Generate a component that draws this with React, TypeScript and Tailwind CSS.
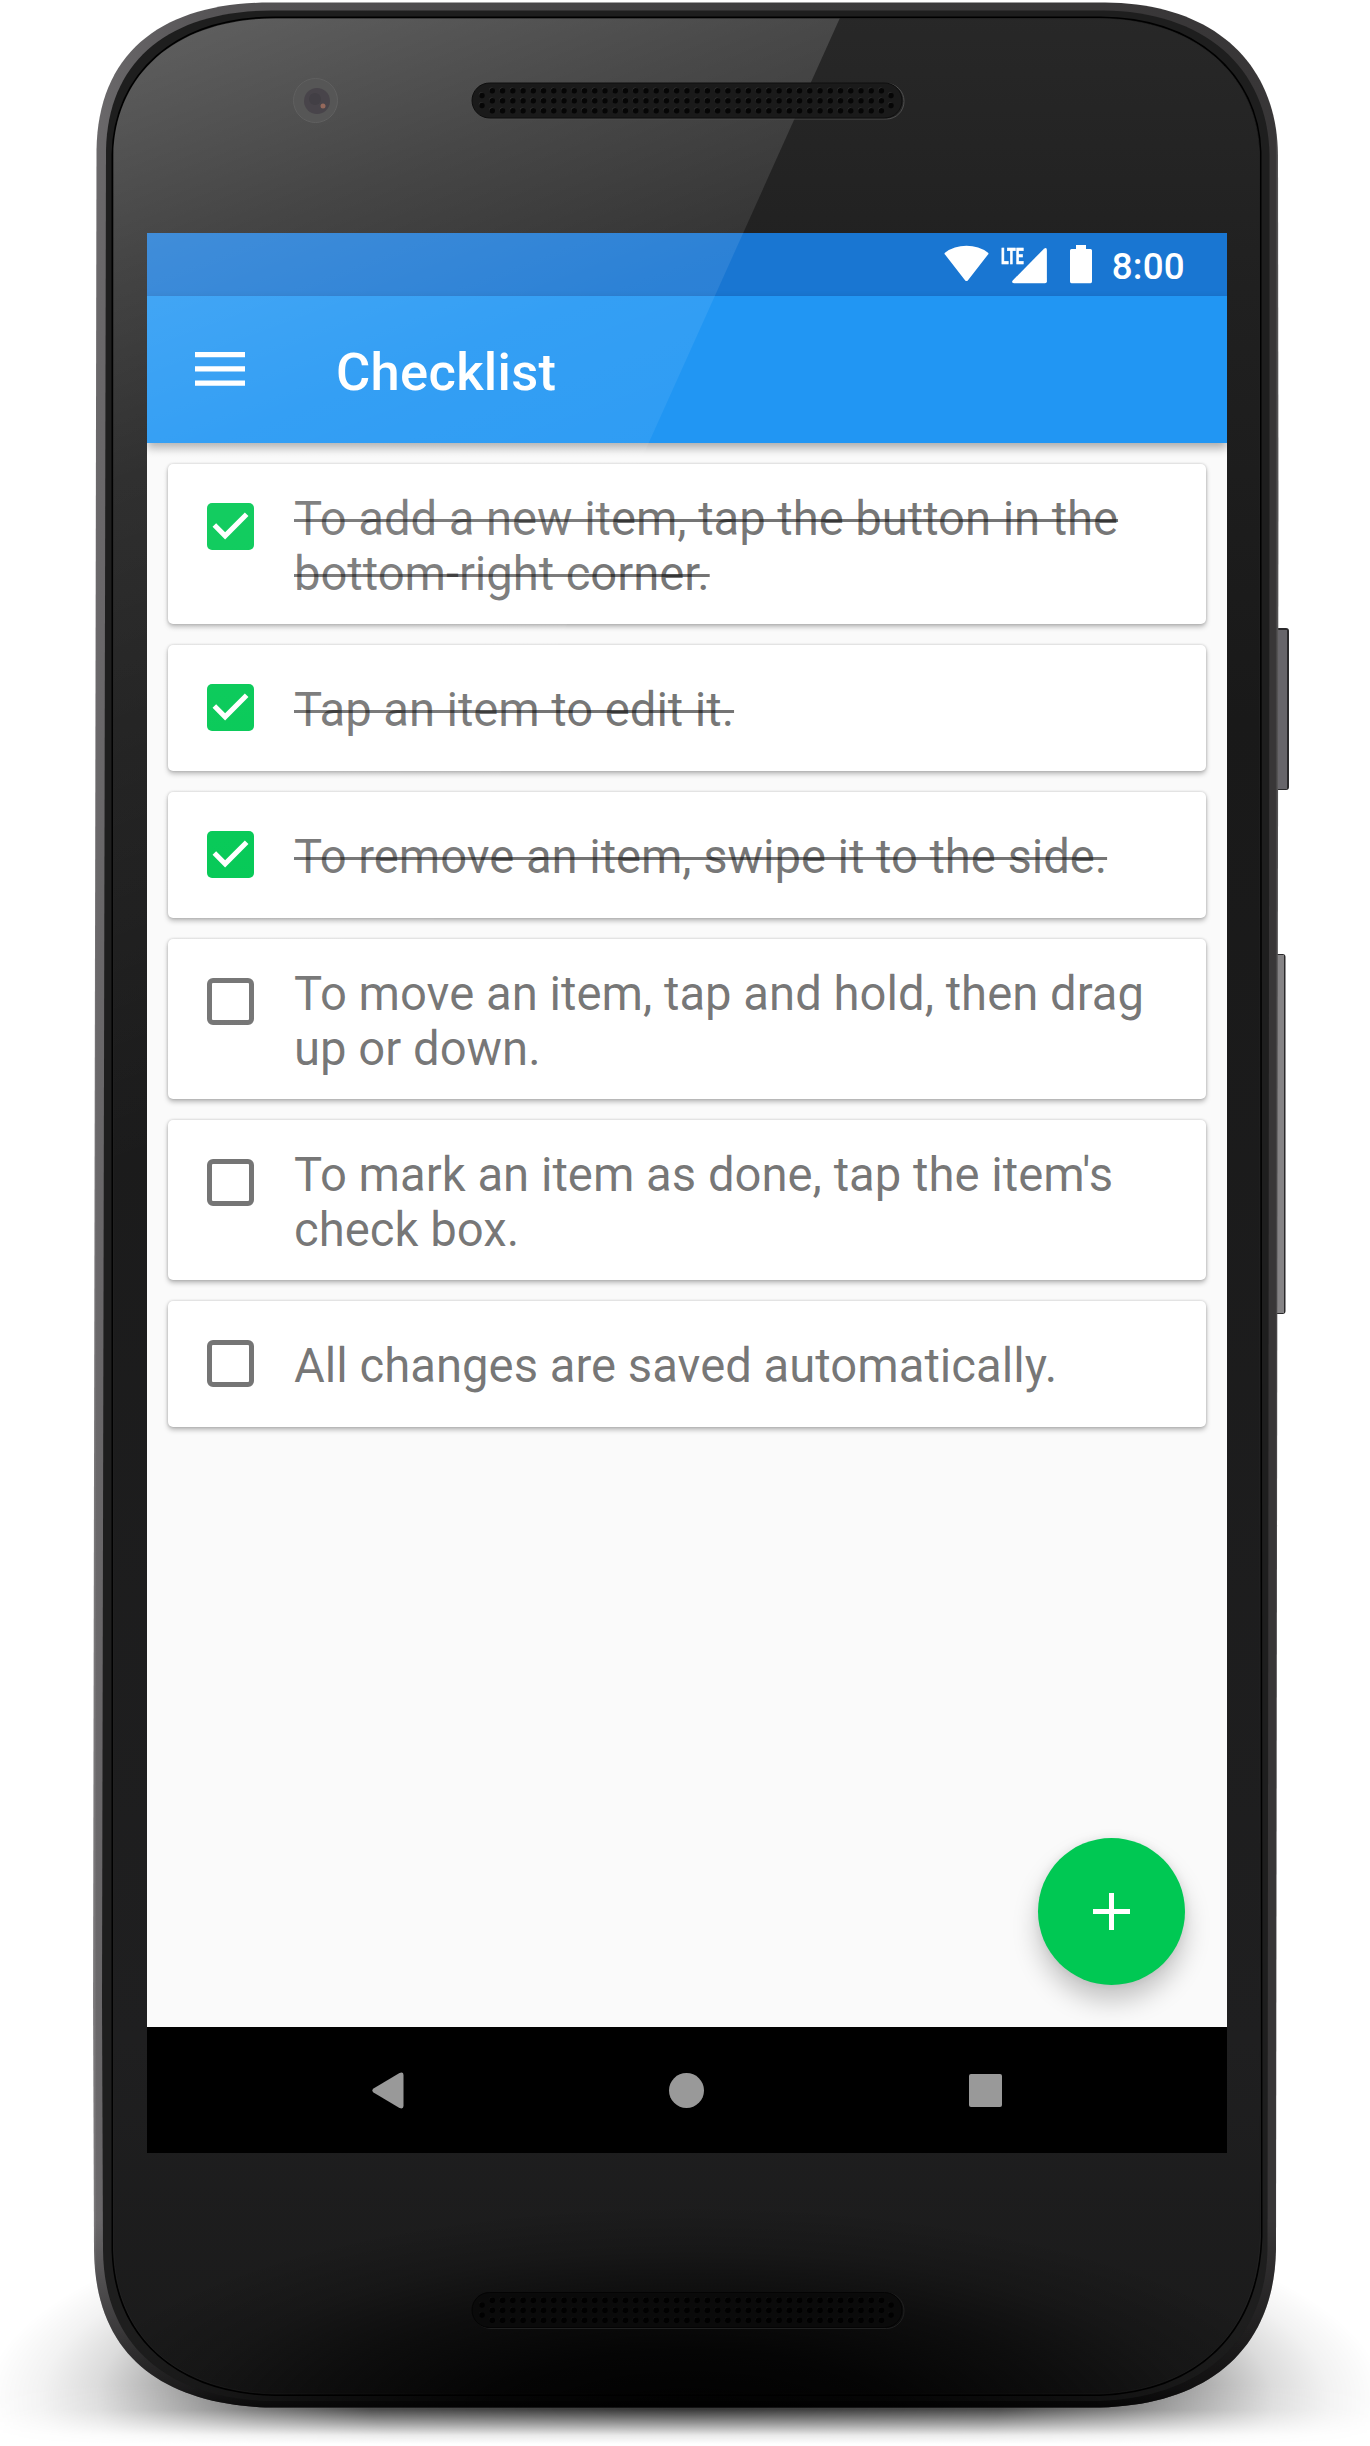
type Item = { lines: string[]; done: boolean };

const items: Item[] = [
  { lines: ["To add a new item, tap the button in the", "bottom-right corner."], done: true },
  { lines: ["Tap an item to edit it."], done: true },
  { lines: ["To remove an item, swipe it to the side."], done: true },
  { lines: ["To move an item, tap and hold, then drag", "up or down."], done: false },
  { lines: ["To mark an item as done, tap the item's", "check box."], done: false },
  { lines: ["All changes are saved automatically."], done: false },
];

const BODY =
  "M96.5 150C98 50 165 2.5 270 2.5H1105C1210 3 1277 60 1278 155L1278.5 500L1276 2250C1274 2352 1205 2405 1100 2407.5H265C165 2403 95 2358 94 2250L93 2000Z";
const BAND =
  "M106 150C108 58 172 10.5 272 10.5H1103C1202 11 1268 66 1269.5 155V500L1267.5 2250C1265 2343 1200 2397 1100 2401H265C172 2397 104 2350 103 2250L102 2000Z";
const GLASS =
  "M113.5 155C115 75 175 18.5 275 18.5H1100C1195 19 1257 75 1259.5 152V500L1260.5 2237C1257 2335 1195 2390 1100 2394H275C180 2392 116 2340 113.5 2250Z";

/** Perforated speaker slot, 431 x 35 */
function Speaker({ x, y, dim }: { x: number; y: number; dim?: boolean }) {
  const holes: [number, number][] = [
    [10, 12.5],
    [10, 22.5],
    [419, 12.5],
    [419, 22.5],
  ];
  for (let c = 0; c < 39; c++) for (let r = 0; r < 3; r++) holes.push([20.3 + c * 10.24, 7.8 + r * 10]);
  return (
    <g transform={`translate(${x} ${y})`}>
      <rect x="1.5" y="0.5" width="430.5" height="35.5" rx="17.5" fill="none" stroke={dim ? "#202020" : "#4e4e4e"} strokeWidth="1" />
      <rect width="430" height="35" rx="17.5" fill={dim ? "#0a0a0a" : "#1a1a1a"} stroke={dim ? "#040404" : "#0e0e0e"} />
      {holes.map(([cx, cy], i) => (
        <g key={i}>
          <circle cx={cx - 0.7} cy={cy - 0.9} r="2.4" fill={dim ? "#141414" : "#343434"} />
          <circle cx={cx} cy={cy} r="2.7" fill={dim ? "#010101" : "#060606"} />
        </g>
      ))}
    </g>
  );
}

function PhoneBody() {
  return (
    <svg className="absolute inset-0" width="1370" height="2446" viewBox="0 0 1370 2446" aria-hidden="true">
      <defs>
        <linearGradient id="rim" x1="93" x2="1279" y1="0" y2="0" gradientUnits="userSpaceOnUse">
          <stop offset="0" stopColor="#858385" />
          <stop offset="0.003" stopColor="#6a686a" />
          <stop offset="0.1" stopColor="#565456" />
          <stop offset="0.6" stopColor="#3c3b3c" />
          <stop offset="0.997" stopColor="#383637" />
          <stop offset="1" stopColor="#6b6a6b" />
        </linearGradient>
        <linearGradient id="rimDark" x1="0" x2="0" y1="2220" y2="2407" gradientUnits="userSpaceOnUse">
          <stop offset="0" stopColor="#000" stopOpacity="0" />
          <stop offset="0.9" stopColor="#000" stopOpacity="0.65" />
          <stop offset="1" stopColor="#000" stopOpacity="0.8" />
        </linearGradient>
        <linearGradient id="glass" x1="0" x2="0" y1="0" y2="2400" gradientUnits="userSpaceOnUse">
          <stop offset="0" stopColor="#282828" />
          <stop offset="0.12" stopColor="#202020" />
          <stop offset="0.3" stopColor="#191919" />
          <stop offset="0.85" stopColor="#1f1f20" />
          <stop offset="1" stopColor="#1a1a1a" />
        </linearGradient>
        <radialGradient id="pool" cx="0" cy="0" r="1" gradientTransform="translate(690 2430) scale(640 225)" gradientUnits="userSpaceOnUse">
          <stop offset="0" stopColor="#000" />
          <stop offset="0.35" stopColor="#000" stopOpacity="0.82" />
          <stop offset="0.6" stopColor="#000" stopOpacity="0.5" />
          <stop offset="0.8" stopColor="#000" stopOpacity="0.18" />
          <stop offset="1" stopColor="#000" stopOpacity="0" />
        </radialGradient>
        <radialGradient id="shadow" cx="0" cy="0" r="1" gradientTransform="translate(685 2400) scale(700 225)" gradientUnits="userSpaceOnUse">
          <stop offset="0" stopColor="#000" stopOpacity="0.9" />
          <stop offset="0.45" stopColor="#000" stopOpacity="0.8" />
          <stop offset="0.62" stopColor="#000" stopOpacity="0.56" />
          <stop offset="0.74" stopColor="#000" stopOpacity="0.33" />
          <stop offset="0.84" stopColor="#000" stopOpacity="0.14" />
          <stop offset="0.92" stopColor="#000" stopOpacity="0.05" />
          <stop offset="1" stopColor="#000" stopOpacity="0" />
        </radialGradient>
        <linearGradient id="fade" x1="0" x2="0" y1="2385" y2="2444" gradientUnits="userSpaceOnUse">
          <stop offset="0" stopColor="#fff" />
          <stop offset="0.42" stopColor="#ddd" />
          <stop offset="0.65" stopColor="#777" />
          <stop offset="0.85" stopColor="#1a1a1a" />
          <stop offset="1" stopColor="#000" />
        </linearGradient>
        <mask id="floor" maskUnits="userSpaceOnUse" x="0" y="2100" width="1370" height="346">
          <rect y="2100" width="1370" height="346" fill="url(#fade)" />
        </mask>
      </defs>
      <rect y="2100" width="1370" height="346" fill="url(#shadow)" mask="url(#floor)" />
      <rect x="1272" y="628" width="17" height="162" rx="3" fill="#2a292b" />
      <rect x="1276" y="630" width="11" height="159" fill="#67656a" />
      <rect x="1272" y="954" width="13.5" height="360" rx="3" fill="#2a292b" />
      <rect x="1276" y="955" width="8" height="358" fill="#858385" />
      <path d={BODY} fill="url(#rim)" />
      <path d={BODY} fill="url(#rimDark)" />
      <path d={BAND} fill="#1e1e1e" />
      <path d={GLASS} fill="url(#glass)" stroke="#000" strokeWidth="4" />
      <path d={GLASS} fill="url(#glass)" stroke="#2c2c2c" strokeWidth="0.6" />
      <path d={BODY} fill="url(#pool)" />
      <Speaker x={472} y={2292.5} dim />
    </svg>
  );
}

/** Light reflection and the parts of the front glass that sit above it */
function Glare() {
  return (
    <svg className="pointer-events-none absolute inset-0 z-20" width="1370" height="2446" viewBox="0 0 1370 2446" aria-hidden="true">
      <defs>
        <linearGradient id="glare" x1="114" y1="19" x2="492" y2="1034" gradientUnits="userSpaceOnUse">
          <stop offset="0" stopColor="#fff" stopOpacity="0.27" />
          <stop offset="0.22" stopColor="#fff" stopOpacity="0.16" />
          <stop offset="0.4" stopColor="#fff" stopOpacity="0.085" />
          <stop offset="0.6" stopColor="#fff" stopOpacity="0.055" />
          <stop offset="1" stopColor="#fff" stopOpacity="0" />
        </linearGradient>
        <clipPath id="glassClip">
          <path d={GLASS} />
        </clipPath>
      </defs>
      <polygon points="100,0 848,0 200,1440 100,1440" fill="url(#glare)" clipPath="url(#glassClip)" />
      <circle cx="315.5" cy="100.5" r="22" fill="#565656" stroke="#606060" />
      <circle cx="317" cy="101" r="13" fill="#48444a" />
      <circle cx="315" cy="99" r="6" fill="#423f45" />
      <circle cx="323" cy="106" r="2.5" fill="#95695c" />
      <Speaker x={472} y={83} />
    </svg>
  );
}

function StatusBar() {
  return (
    <div className="flex h-[63px] items-start justify-end bg-[#1976d2] pr-[42px] text-white">
      <svg className="mt-3 mr-[12px]" width="45" height="38" viewBox="0 0 45 38" fill="currentColor">
        <path d="M1.2 9.8Q-.3 8.6 1.3 7.5Q10 .7 22.5 .7T43.7 7.5Q45.3 8.6 43.8 9.8L24 35.2Q22.5 37 21 35.2Z" />
      </svg>
      <div className="flex pt-3">
        <span className="mt-[2px] block h-[19px] w-[11px] origin-left scale-x-[0.62] text-[22.5px] leading-[19px] font-bold [-webkit-text-stroke:0.7px_white]">
          LTE
        </span>
        <svg className="mt-[3px]" width="35" height="36" viewBox="0 0 35 36" fill="currentColor">
          <path d="M32 .7Q34.8-1 34.9 2V33.5Q34.9 35.2 33 35.2H2Q-1 35.1 .7 32.5Z" />
        </svg>
      </div>
      <svg className="mt-3 ml-[23px]" width="22" height="39" viewBox="0 0 22 39" fill="currentColor">
        <path d="M6 0H16V4H20.5Q22 4 22 5.5V36.5Q22 38.3 20.5 38.3H1.5Q0 38.3 0 36.5V5.5Q0 4 1.5 4H6Z" />
      </svg>
      <span className="mt-3 ml-5 text-[36.75px] leading-[43px] font-medium tracking-[0.25px]">8:00</span>
    </div>
  );
}

function CheckBox({ done }: { done: boolean }) {
  if (!done) return <span className="size-[47px] rounded-[6px] border-[5px] border-[#757575]" />;
  return (
    <span className="flex size-[47px] items-center justify-center rounded-[5px] bg-[#00c853]">
      <svg width="47" height="47" viewBox="0 0 48 48" fill="none" stroke="#fff" strokeWidth="5.2">
        <path d="M7.5 22.5L18.5 33.5L40.5 11.5" />
      </svg>
    </span>
  );
}

export default function App() {
  return (
    <div className="relative h-[2446px] w-[1370px] overflow-hidden bg-white pt-[233px] pl-[147px] font-['Roboto',sans-serif]">
      <PhoneBody />
      <main className="relative flex h-[1920px] w-[1080px] flex-col overflow-hidden bg-[#fafafa]">
        <StatusBar />
        <header className="z-10 flex h-[147px] items-center bg-[#2196f3] text-white shadow-[0_5px_9px_rgba(0,0,0,0.32)]">
          <svg className="-mt-[2px] ml-12" width="50" height="36" viewBox="0 0 50 36" fill="currentColor">
            <path d="M0 1h50v5.3H0zM0 15.2h50v5.3H0zM0 29.400h50v5.3H0z" />
          </svg>
          <h1 className="mt-[5px] ml-[91px] text-[52.5px] leading-[62px] font-medium tracking-[0.3px]">Checklist</h1>
        </header>
        <ul className="flex flex-1 flex-col gap-[21px] p-[21px]">
          {items.map((item) => (
            <li
              key={item.lines[0]}
              className="flex min-h-[126px] items-start rounded-[5px] bg-white pl-[39px] shadow-[0_0_3px_rgba(0,0,0,0.2),0_3px_5px_rgba(0,0,0,0.25)]"
            >
              <div className="flex h-[125px] items-center">
                <CheckBox done={item.done} />
              </div>
              <p
                className={
                  "ml-10 text-[47.25px] leading-[55px] whitespace-nowrap text-black/54 decoration-3 " +
                  (item.lines.length > 1 ? "pt-[28px] pb-[22px] " : "pt-[38px] ") +
                  (item.done ? "tracking-[-0.07px] line-through" : "")
                }
              >
                {item.lines.map((line) => (
                  <span key={line} className="block">
                    {line}
                  </span>
                ))}
              </p>
            </li>
          ))}
        </ul>
        <button
          aria-label="Add item"
          className="absolute right-[42px] bottom-[168px] flex size-[147px] items-center justify-center rounded-full bg-[#00c853] shadow-[0_16px_26px_rgba(0,0,0,0.22),0_0_10px_rgba(0,0,0,0.08)]"
        >
          <svg width="37" height="37" viewBox="0 0 37 37" fill="#fff">
            <path d="M16 0h5v16h16v5H21v16h-5V21H0v-5h16z" />
          </svg>
        </button>
        <nav className="flex h-[126px] items-center bg-black text-[#999]">
          <svg className="ml-[225px]" width="32" height="37" viewBox="0 0 32 37" fill="currentColor">
            <path d="M1.5 16.6L27.5 1Q31.5-.5 31.5 3V34Q31.5 37.5 27.5 36L1.5 20.4Q-.8 18.5 1.5 16.6Z" />
          </svg>
          <span className="ml-[265px] size-[35px] rounded-full bg-current" />
          <span className="ml-[265px] size-[33px] rounded-[2px] bg-current" />
        </nav>
      </main>
      <Glare />
    </div>
  );
}
